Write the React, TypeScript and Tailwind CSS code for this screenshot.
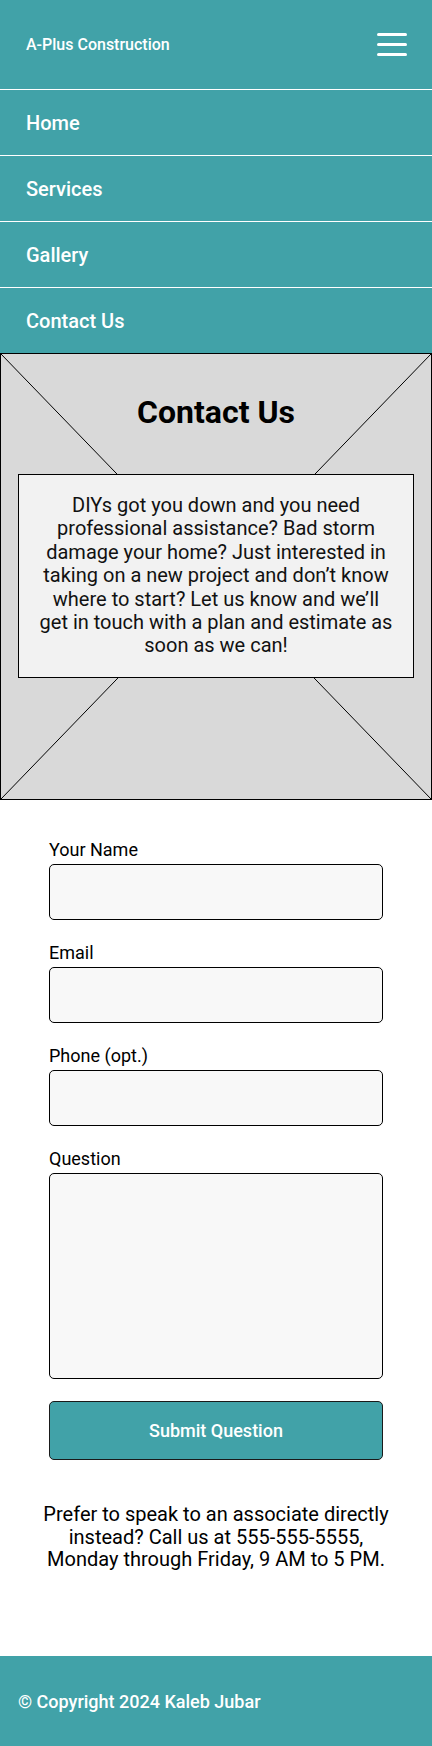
const navItems = ['Home', 'Services', 'Gallery', 'Contact Us'];

function Field({ label, tall }: { label: string; tall?: boolean }) {
    return (
        <label className="flex flex-col">
            <span className="text-[18px] leading-[21px] text-black mb-1">{label}</span>
            {tall ? (
                <textarea className="h-[206px] w-full resize-none rounded-[5px] border border-black bg-[#f8f8f8] p-2 text-[16px] outline-none" />
            ) : (
                <input className="h-[56px] w-full rounded-[5px] border border-black bg-[#f8f8f8] px-2 text-[16px] outline-none" />
            )}
        </label>
    );
}

export default function App() {
    return (
        <div className="w-[432px] min-h-[1746px] bg-white flex flex-col font-['Roboto','Liberation_Sans',sans-serif]">
            <header className="bg-[#41a2a8] text-white">
                <div className="h-[89px] flex items-center justify-between pl-[26px] pr-[25px]">
                    <span className="text-[16px] font-medium">A-Plus Construction</span>
                    <button className="flex flex-col gap-[7px] w-[30px]" aria-label="Menu">
                        <span className="block h-[3px] w-full rounded-full bg-white" />
                        <span className="block h-[3px] w-full rounded-full bg-white" />
                        <span className="block h-[3px] w-full rounded-full bg-white" />
                    </button>
                </div>
                <nav className="flex flex-col">
                    {navItems.map((item) => (
                        <a key={item} href="#" className="h-[66px] border-t border-white flex items-center pl-[26px] text-[20px] font-medium">
                            {item}
                        </a>
                    ))}
                </nav>
            </header>

            <section className="relative h-[447px] border border-black bg-[#d9d9d9] flex flex-col items-center">
                <svg className="absolute inset-0 w-full h-full" viewBox="0 0 430 445" preserveAspectRatio="none">
                    <line x1="0" y1="0" x2="430" y2="445" stroke="#000" strokeWidth="1" vectorEffect="non-scaling-stroke" />
                    <line x1="430" y1="0" x2="0" y2="445" stroke="#000" strokeWidth="1" vectorEffect="non-scaling-stroke" />
                </svg>
                <h1 className="relative mt-[40px] text-[32px] leading-[37px] font-bold text-black">Contact Us</h1>
                <div className="relative mt-[43px] self-stretch mx-[17px] h-[204px] border border-black bg-[#f2f2f2] pt-[19px] text-center text-[20px] leading-[23.4px] text-[#111]">
                    DIYs got you down and you need<br />
                    professional assistance? Bad storm<br />
                    damage your home? Just interested in<br />
                    taking on a new project and don’t know<br />
                    where to start? Let us know and we’ll<br />
                    get in touch with a plan and estimate as<br />
                    soon as we can!
                </div>
            </section>

            <form className="w-[334px] mx-auto pt-[39px] flex flex-col gap-[22px]" onSubmit={(e) => e.preventDefault()}>
                <Field label="Your Name" />
                <Field label="Email" />
                <Field label="Phone (opt.)" />
                <Field label="Question" tall />
                <button type="submit" className="h-[59px] rounded-[5px] border border-[#1a1a1a] bg-[#41a2a8] text-white text-[18px] font-medium">
                    Submit Question
                </button>
            </form>

            <p className="mt-[43px] text-center text-[20px] leading-[22.5px] text-black">
                Prefer to speak to an associate directly<br />
                instead? Call us at 555-555-5555,<br />
                Monday through Friday, 9 AM to 5 PM.
            </p>

            <footer className="mt-auto h-[90px] bg-[#41a2a8] flex items-center pl-[18px] text-white text-[18px] font-medium">
                © Copyright 2024 Kaleb Jubar
            </footer>
        </div>
    );
}
